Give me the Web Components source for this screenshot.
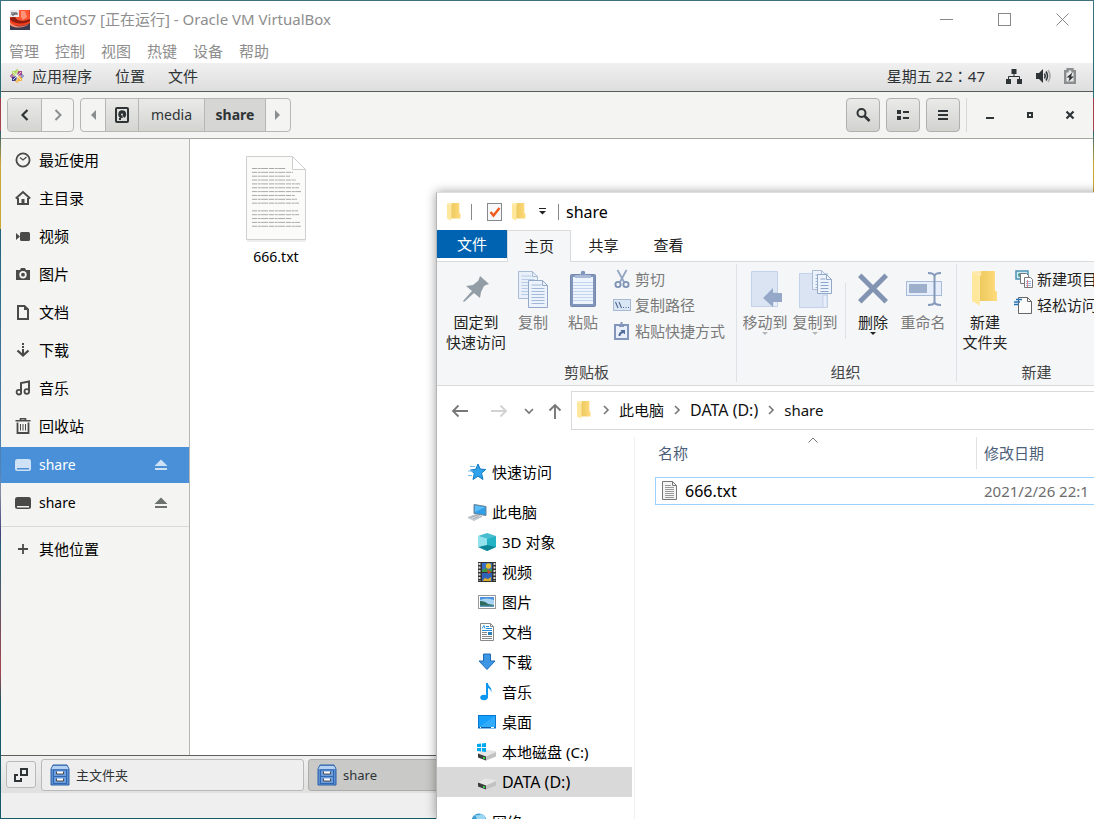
<!DOCTYPE html>
<html lang="zh-CN">
<head>
<meta charset="utf-8">
<title>CentOS7 - Oracle VM VirtualBox</title>
<style>
html,body{margin:0;height:100%;overflow:hidden}
body{font:15px/20px "Noto Sans","Noto Sans CJK SC",sans-serif;color:#111;background:linear-gradient(180deg,#3f7280 0,#2c6b78 5%,#2c6b78 12%,#a33b4a 12%,#a84450 16%,#2a5d6e 16%,#c9a63a 20%,#c9a63a 28%,#22647a 28%,#5484b8 58%,#8790a5 60%,#45407c 65%,#22647a 67%,#a5444d 82%,#155a66 86%)}
</style>
</head>
<body>
<desk-top>
  <vm-window></vm-window>
  <explorer-window></explorer-window>
</desk-top>
<script>
const ink = '#2e3436';
const folder = (w,h) => `<path d="M${w*.3} 0H${w*.88}V${h*.55}L${w*.96} ${h*.6}V${h*.86}H${w*.3}Z" fill="url(#fb)"/><path d="M0 0.5 L${w*.3} ${h*.14}V${h*.99}L0 ${h*.86}Z" fill="#ffe79c"/><path d="M0 .5L${w*.3} 0H${w*.36}V${h*.14}Z" fill="#ffe8a6"/><defs><linearGradient id="fb"><stop offset="0" stop-color="#edc95e"/><stop offset="1" stop-color="#ffdb7d"/></linearGradient></defs>`;
const drive = '<path d="M0 7.500L7 3.500 18 5v5L8 14.500 0 11.500Z" fill="#e6e6e6"/><path d="M8 10.500L18 6v4.500L8 14.500Z" fill="#c2c2c2"/><path d="M0 7.500l8 3v4l-8-3Z" fill="#3c3c3c"/><path d="M5 11h2v2H5Z" fill="#2fd04a"/>';
const lines = (x,y,w,n,s,c) => Array.from({length:n},(_,i)=>`<path d="M${x} ${y+i*s}h${w}" stroke="${c}"/>`).join('');
const page = (x,y,w,h,st,f,c,n) => `<path d="M${x} ${y}h${w-5}l5 5v${h-5}h${-w}Z" fill="${f}" stroke="${st}"/><path d="M${x+w-5} ${y}v5h5" fill="none" stroke="${st}"/>${lines(x+3,y+4.500,w-9,1,3,c)}${lines(x+3,y+8,w-6,n,3,c)}`;
const textWidths = [34,41,38,44,48,47,49,43,45,47,0,46,47,40,48,49];
const textLines = textWidths.map((w,i)=>w?`<path d="M7 ${13.500+i*3.850}h${w}" stroke="#a9a9a9" stroke-dasharray="5 .7 3 .5 7 .8"/>`:'').join('');
const ICONS = {
 redhat:[20,20,`<rect width="20" height="20" fill="#d8351c"/><path d="M9 0h10l1 9-5 3-8-1-2-4Z" fill="#ff5532"/><path d="M11 1h4l2 6-4 3-2-3Z" fill="#ff9478"/><path d="M0 8l5-1c1 4 8 5 15 2v3c-6 4-16 3-20-1Z" fill="#8e1b0e"/><path d="M0 9c3 5 14 6 20 2v3c-5 4-15 4-20 0Z" fill="#f2401f"/><path d="M0 13c5 4 14 4 20 0v7H0Z" fill="#3b3b50"/><path d="M0 12c4 5 12 6 19 2-4 4-14 5-19 1Z" fill="#ff8c70"/><rect width="9" height="7" fill="#e8e8ee"/><path d="M2 2v3h2V2M5 5V3h2v2" stroke="#444" fill="none"/>`],
 centos:[14,14,`<path d="M7 0l2.200 2.200v4H4.800v-4Z" fill="#9ccd2a"/><path d="M7 14l2.200-2.200v-4H4.800v4Z" fill="#efa724"/><path d="M0 7l2.200-2.200h4v4.400h-4Z" fill="#932279"/><path d="M14 7l-2.200-2.200h-4v4.400h4Z" fill="#5b5aa5"/><path d="M2 2h3l2 2v3H4L2 5Z" fill="#b9d96a"/><path d="M12 2v3l-2 2H7V4l2-2Z" fill="#a8448c"/><path d="M2 12V9l2-2h3v3l-2 2Z" fill="#3f3e8f"/><path d="M12 12H9l-2-2V7h3l2 2Z" fill="#f0b243"/><path d="M7 1v12M1 7h12M3 3l8 8M11 3l-8 8" stroke="#f4f4f4" stroke-width=".8"/>`],
 wmin:[13,13,`<path d="M0 6.500h13" stroke="#888"/>`],
 wmax:[13,13,`<rect x=".5" y=".5" width="12" height="12" fill="none" stroke="#888"/>`],
 wclose:[13,13,`<path d="M.5.5l12 12M12.500.5l-12 12" stroke="#888"/>`],
 net:[16,16,`<path d="M5.500 1h5v5h-5ZM0 11h5v5H0ZM11 11h5v5h-5Z" fill="${ink}"/><path d="M8 6v3M2.500 11V8.500h11V11" stroke="${ink}" fill="none"/>`],
 vol:[16,16,`<path d="M1 5h3l4-4v14l-4-4H1Z" fill="${ink}"/><path d="M9.500 5.500q1.500 2.500 0 5M11 3.500q3 4.500 0 9" stroke="${ink}" stroke-width="1.500" fill="none"/><path d="M13 2q4 6 0 12" stroke="#aaa" stroke-width="1.600" fill="none"/>`],
 batt:[12,16,`<path d="M1.200 3.200h2.300v-2h5v2h2.300v11.600H1.200Z" fill="#e8e8e8" stroke="#8b8e8f" stroke-width="2.400"/><path d="M8.500 4.500l-6 5h3l-1 4 5.500-5H7Z" fill="${ink}"/>`],
 back:[16,16,`<path d="M10.500 3L5.500 8l5 5" fill="none" stroke="${ink}" stroke-width="2.200"/>`],
 fwd:[16,16,`<path d="M5.500 3l5 5-5 5" fill="none" stroke="#8b8e8f" stroke-width="2"/>`],
 tril:[8,12,`<path d="M7 1v10L2 6Z" fill="#8b8e8f"/>`],
 trir:[8,12,`<path d="M1 1v10l5-5Z" fill="#8b8e8f"/>`],
 disk:[16,16,`<rect x="2" y="1" width="12" height="14" rx="1" fill="none" stroke="${ink}" stroke-width="2"/><circle cx="8.200" cy="7.200" r="3.900" fill="${ink}"/><path d="M8 8l3.500 4.500-2 .5Z" fill="#ddd"/><circle cx="8" cy="7.500" r="1" fill="#ddd"/><rect x="5" y="11" width="2" height="2" fill="${ink}"/>`],
 search:[16,16,`<circle cx="6.500" cy="6" r="4" fill="none" stroke="${ink}" stroke-width="2"/><path d="M9.500 9l5 5" stroke="${ink}" stroke-width="2.600"/>`],
 list:[16,16,`<path d="M2 3h4v4H2ZM2 9h4v4H2ZM8 4h6v2H8ZM8 10h6v2H8Z" fill="${ink}"/>`],
 burger:[16,16,`<path d="M3 3h10v2H3ZM3 7h10v2H3ZM3 11h10v2H3Z" fill="${ink}"/>`],
 gmin:[16,16,`<path d="M4 10h8v2H4Z" fill="${ink}"/>`],
 gmax:[16,16,`<rect x="6" y="6" width="4" height="4" fill="none" stroke="${ink}" stroke-width="2"/>`],
 gclose:[16,16,`<path d="M4.500 4.500l7 7M11.500 4.500l-7 7" stroke="${ink}" stroke-width="2.200"/>`],
 clock:[16,16,`<circle cx="8" cy="8" r="6.600" fill="none" stroke="currentColor" stroke-width="1.800"/><path d="M5 5.500L8 8l3.500-3" fill="none" stroke="currentColor" stroke-width="1.300"/>`],
 home:[16,16,`<path d="M.8 8.500L8 2l7.200 6.500" fill="none" stroke="currentColor" stroke-width="1.900"/><path d="M3 8v6h10V8" fill="none" stroke="currentColor" stroke-width="2"/><path d="M6.500 9h3v5h-3Z" fill="currentColor"/>`],
 video:[16,16,`<rect x="5" y="4" width="10" height="9" rx="1.500" fill="currentColor"/><path d="M1 5l4 3.500L1 12Z" fill="currentColor"/>`],
 camera:[16,16,`<path d="M1 4h4l1-2h4l1 2h4v10H1Z" fill="currentColor"/><circle cx="8" cy="8.700" r="2.800" fill="none" stroke="#f4f4f2" stroke-width="1.800"/>`],
 doc:[16,16,`<path d="M3 2h6.500L13 5.500V15H3Z" fill="none" stroke="currentColor" stroke-width="2"/><path d="M9 1v5h5Z" fill="currentColor"/>`],
 down:[16,16,`<path d="M8 1v2M8 4v2M8 7v5" stroke="currentColor" stroke-width="2"/><path d="M2.500 8.500L8 13.500l5.500-5" fill="none" stroke="currentColor" stroke-width="2.300"/>`],
 music:[16,16,`<path d="M6 12V3l8-1.500V11" fill="none" stroke="currentColor" stroke-width="2"/><circle cx="3.900" cy="12.200" r="2.300" fill="none" stroke="currentColor" stroke-width="1.800"/><circle cx="11.800" cy="11.500" r="2.300" fill="none" stroke="currentColor" stroke-width="1.800"/>`],
 trash:[16,16,`<path d="M.5 2.800h15M5.500 2V.8h5V2" fill="none" stroke="currentColor" stroke-width="1.600"/><path d="M2.500 4.500V15h11V4.500" fill="none" stroke="currentColor" stroke-width="1.800"/><path d="M5.500 6v6.500M8 6v6.500M10.500 6v6.500" stroke="currentColor"/>`],
 volume:[16,16,`<path d="M2.500 2h11Q16 2 16 4.500v7Q16 14 13.500 14h-11Q0 14 0 11.500v-7Q0 2 2.500 2Z" fill="currentColor"/><path d="M2 11h12v1.500H2Z" fill="var(--slot-color,#f4f4f2)"/>`],
 eject:[14,14,`<path d="M7 1.500l6.500 6.500H.5ZM1 10h12v2H1Z" fill="currentColor"/>`],
 plus:[16,16,`<path d="M8 3v10M3 8h10" stroke="currentColor" stroke-width="1.800"/>`],
 bigtxt:[62,88,`<path d="M1.500 1.500h46l13 13v70h-59Z" fill="#fbfbfa" stroke="#cfcfcf"/><path d="M2 86h58.500" stroke="#ddd"/><path d="M47.500 1.500v13h13Z" fill="#fff" stroke="#cdcdcd"/>${textLines}`],
 switcher:[14,14,`<path d="M7 1h6v6H7Z" fill="none" stroke="${ink}" stroke-width="2"/><path d="M4 7H1v6h6V10" fill="none" stroke="${ink}" stroke-width="2"/>`],
 cabinet:[20,22,`<path d="M3 1h14l2 4v16H1V5Z" fill="#5c8fd0" stroke="#2d61a8"/><path d="M3 2h14l1.500 3h-17Z" fill="#b5d2f2"/><rect x="3.500" y="6" width="13" height="13.500" fill="#6d9ddd" stroke="#2f66b0"/><path d="M4 12.500h12" stroke="#2f66b0"/><path d="M6.500 7.500v2.500h7V7.500M6.500 14.500v2.500h7v-2.500" fill="#fff" stroke="#4b4b4b"/>`],
 f14:[14,18,folder(14,18)], f26:[28,36,`<g transform="translate(1,0)">${folder(26,35)}</g>`],
 check:[16,18,`<rect x=".5" y=".5" width="14" height="17" fill="#f6f8fa" stroke="#85888c"/><path d="M3.500 9l3 3.500L12.500 5" fill="none" stroke="#f0591c" stroke-width="2.400"/>`],
 qdrop:[9,9,`<path d="M1 1.500h7" stroke="#222"/><path d="M1 4h7l-3.500 3.500Z" fill="#222"/>`],
 pin:[30,30,`<path d="M19 2l9 8-3 1-2 1-3 6-1 6-6-5-10 9-1-1 9-10-6-5 7-1 5-4 1-2Z" fill="#929da6"/>`],
 copy:[32,38,page(1.500,1.500,19,27,'#a9bcd6','#e9f0fa','#b7cae6',6)+page(11.500,10.500,19,27,'#94a9c9','#edf3fc','#a3b9da',6)],
 paste:[28,38,`<rect x="1.500" y="4.500" width="25" height="32" rx="1" fill="#8296bb" stroke="#7288ae"/><rect x="4" y="7" width="20" height="27" fill="#eef4fd"/>${lines(4,12.500,20,7,3,'#c3d5ee')}<path d="M6 8V5h5l2-3h2l2 3h5v3Z" fill="#a9b9d6"/><circle cx="14" cy="3" r="2.300" fill="#8296bb"/>`],
 cut:[18,20,`<path d="M4.500 1l6.500 12M13.500 1L7 13" stroke="#93a5c2" stroke-width="1.800"/><circle cx="5" cy="15.500" r="2.600" fill="none" stroke="#7e93b6" stroke-width="1.900"/><circle cx="13" cy="15.500" r="2.600" fill="none" stroke="#7e93b6" stroke-width="1.900"/>`],
 cpath:[18,12,`<rect x=".5" y=".5" width="17" height="11" fill="#dbe6f5" stroke="#a7b8d1"/><path d="M2.500 3l2.500 6M6 3l2.500 6" stroke="#4f6a96" stroke-width="1.100"/><path d="M10 8.500h1M12.500 8.500h1M15 8.500h1" stroke="#4f6a96"/>`],
 shortcut:[18,20,`<rect x="2" y="4" width="13" height="14" fill="#e9f0fa" stroke="#8296bb" stroke-width="2"/><path d="M6 6V3h1.500V1h2v2H11v3Z" fill="#8296bb"/><path d="M5.500 15q0-4 3-4.500L7.500 9H12v4.500l-1.500-1.500Q7.500 12.500 7.500 15Z" fill="#536d9b"/>`],
 moveto:[34,38,`<path d="M3.500 1.500h26v35h-26Z" fill="#dae4f3" stroke="#c3d2e8"/><path d="M25 36v-13h4.500v13" fill="#e8effa" stroke="#c3d2e8"/><path d="M15 28l10-10v5h9v9h-9v5Z" fill="#96a8c8"/>`],
 copyto:[36,40,`<path d="M2.500 4.500h28v34h-28Z" fill="#dae4f3" stroke="#c3d2e8"/><path d="M26 38v-12h4v12" fill="#e8effa" stroke="#c3d2e8"/>${page(15.500,1.500,14,19,'#a9bcd6','#edf3fc','#9db4d8',4)}${page(20.500,5.500,14,19,'#94a9c9','#edf3fc','#8ba4cc',4)}`],
 del:[34,34,`<path d="M2 5l3.500-3.500L17 13 28.500 1.500 32 5 20.500 16.500 32 28l-3.500 3.500L17 20 5.500 31.500 2 28l11.500-11.500Z" fill="#8394b3"/>`],
 rename:[38,36,`<rect x="2.500" y="10.500" width="35" height="14" fill="#e6eefb" stroke="#a9bbd8"/><rect x="5" y="13" width="18" height="9" fill="#9eafcb"/><path d="M24 2q6 0 6.500 3v26q-.5 3-6.500 3M37 2q-6 0-6.500 3M37 34q-6 0-6.500-3" fill="none" stroke="#8599bb" stroke-width="2"/>`],
 newitem:[18,18,`<rect x="1" y="1" width="12" height="8" fill="#cdeaf6" stroke="#4b93b5" stroke-width="1.500"/><circle cx="5" cy="5" r="2" fill="#4a9a86"/><path d="M5.500 3.500h6l2 2v8h-8Z" fill="#fff" stroke="#777"/><path d="M9.500 7.500h6l2 2v8h-8Z" fill="#fff" stroke="#777"/><path d="M11 11.500h5M11 13.500h5M11 15.500h5" stroke="#9bb8e8"/><path d="M12.500 10v7" stroke="#e57a7a"/>`],
 easy:[18,19,`<path d="M3.500 1.500h9l4 4v12h-13Z" fill="#fbfbfb" stroke="#666"/><path d="M12.500 1.500v4h4" fill="none" stroke="#666"/><path d="M1 3.500h6M-1 6h6M-1 8.500h4" stroke="#2474b8" stroke-width="1.300"/>`],
 drop:[8,5,`<path d="M1 0h6l-3 3Z" fill="currentColor"/>`],
 aback:[18,14,`<path d="M16 7H1M6.500 1.500L1 7l5.500 5.500" fill="none" stroke="#777" stroke-width="1.800"/>`],
 afwd:[18,14,`<path d="M1 7h15M10.500 1.500L16 7l-5.500 5.500" fill="none" stroke="#d2d2d2" stroke-width="1.800"/>`],
 aup:[14,16,`<path d="M7 16V2M1.500 7.500L7 2l5.500 5.500" fill="none" stroke="#777" stroke-width="1.900"/>`],
 adown:[10,8,`<path d="M2 2l4 4 4-4" fill="none" stroke="#777" stroke-width="1.700"/>`],
 crumb:[8,10,`<path d="M1 1l4 4-4 4" fill="none" stroke="#777" stroke-width="1.600"/>`],
 sort:[10,6,`<path d="M.5 5.500L5 1l4.500 4.500" fill="none" stroke="#777"/>`],
 star:[18,18,`<path d="M9 1l2.200 5 5.500.5-4.200 3.700 1.500 6.300-5-3.300L4 16.500l1.300-6L1.500 7l5.200-.7Z" fill="#2ea3ec" stroke="#1479c0"/><path d="M1 3.500h5M-1 8h5M-1 12.500h4" stroke="#74bdec"/>`],
 pc:[20,18,`<path d="M6 1.500l12 2v9l-12-2Z" fill="#2f9fe8" stroke="#708090"/><path d="M7 2.500l10 1.700L7 9Z" fill="#5dbdf7"/><path d="M0 14.500l8-3 6 2-8 4Z" fill="#d3d8de" stroke="#9ba3ad" stroke-width=".6"/><path d="M2.500 14.500l7-2.200M5 16l6-2.500" stroke="#8c949e" stroke-width=".7"/>`],
 cube:[18,18,`<path d="M9 0l9 3-9 3-9-3Z" fill="#49bdd0"/><path d="M0 3l9 3v12l-9-4Z" fill="#8fe6ef"/><path d="M18 3l-9 3v12l9-4Z" fill="#1fa6b8"/><path d="M0 14l9-3 9 3-9 4Z" fill="#0f8697"/><path d="M9 6v6l-9 2V3Z" fill="#92e3eb"/><path d="M9 6v6l9 2V3Z" fill="#23b3c4"/>`],
 film:[18,20,`<rect width="18" height="20" fill="#333"/><path d="M1.500 1v18M16.500 1v18" stroke="#ddd" stroke-width="2" stroke-dasharray="2 1.500"/><rect x="4" y="1" width="10" height="9" fill="#356fc8"/><rect x="4" y="11" width="10" height="8" fill="#2f62bb"/><circle cx="10.500" cy="4" r="2.700" fill="#e7c02e"/><path d="M4 8l4-2 3 2 3-1v3H4Z" fill="#3e9942"/><path d="M9 7l4 3-3 2Z" fill="#d2412d"/><path d="M5 18l2-2 3 1 3-2v4H5Z" fill="#d7ab31"/>`],
 pic:[18,16,`<rect x=".5" y="1.500" width="17" height="13" fill="#fff" stroke="#999"/><rect x="2" y="3" width="14" height="10" fill="#a9d3f2"/><path d="M2 6q6-3 14 0v-3H2Z" fill="#4d92dc"/><path d="M2 7q5 0 8 3l6 1v1H2Z" fill="#2f6b5c"/><path d="M2 11.500h14v1.500H2Z" fill="#5e97b8"/>`],
 ndoc:[16,18,`<path d="M1.500.5h10l3 3v14h-13Z" fill="#fff" stroke="#888"/><path d="M11.500.5v3h3" fill="none" stroke="#888"/><path d="M3 5.500l2-3 1 3M7 3.500h3M7 5.500h6M3 7.500h10" fill="none" stroke="#2a90dd"/><path d="M3 9.500h5M3 11.500h5M3 13.500h10M3 15.500h10" stroke="#888"/><rect x="9" y="9" width="4" height="3" fill="#2b7fb2"/>`],
 ndown:[18,18,`<path d="M5.500 1h7v7h4.500l-8 8.500-8-8.500h4.500Z" fill="#3d96e4" stroke="#1f6db8"/>`],
 nmusic:[16,18,`<ellipse cx="5" cy="14.500" rx="3.700" ry="2.800" fill="#0d97f0"/><path d="M7 0h2c0 4 5 4 3 10 .3-3-1-4-3-5v10H7Z" fill="#0d97f0"/>`],
 desk:[18,14,`<rect x=".5" y=".5" width="17" height="12.500" fill="#17a0fb" stroke="#0b78cf"/><path d="M1 12L17 1v11Z" fill="#42b3fd" opacity=".6"/><path d="M1 12.500h16" stroke="#0a5da6"/><path d="M2 12.500h1M13 12.500h3" stroke="#fff"/>`],
 cdrive:[20,18,`<g transform="translate(1,3)">${drive}</g><path d="M0 1l4-.5V4H0ZM4.800.4L9 0v4H4.800ZM0 5h4v3.500L0 8ZM4.800 5H9v4l-4.200-.5Z" fill="#00a8f0"/>`],
 drive:[20,18,`<g transform="translate(1,2)">${drive}</g>`],
 globe:[20,18,`<circle cx="11" cy="8" r="7.500" fill="#3d9bd3"/><path d="M7 2q4 1 6-1 4 1 5 4l-4 3-5-2Z" fill="#9bd7f3"/><path d="M0 14l7-4 5 3-7 5Z" fill="#58aee6"/>`],
 txt:[16,20,`<path d="M.5.500h10l4 4v14H.5Z" fill="#f4f4f4" stroke="#777"/><path d="M10.500.5v4h4" fill="none" stroke="#777"/>${lines(3,4.500,6,1,2,'#999')}${lines(3,6.500,9,6,2,'#999')}`]
};
function define(name, css, html, setup){
  const t = document.createElement('template');
  t.innerHTML = `<style>*{box-sizing:border-box}button{font:inherit;color:inherit;background:none;border:0;padding:0;margin:0;white-space:nowrap}a{color:inherit;text-decoration:none}${css}</style>${html}`;
  customElements.define(name, class extends HTMLElement{
    connectedCallback(){
      if(this.shadowRoot) return;
      const r = this.attachShadow({mode:'open'});
      r.append(t.content.cloneNode(true));
      if(setup) setup(this, r);
    }
  });
}
function icon(name, cls=''){
  const i = document.createElement('ui-icon');
  i.setAttribute('name', name);
  i.className = cls;
  return i;
}
define('ui-icon', ':host{display:block;flex:none}div,svg{display:block;overflow:visible}', '<div></div>', (el,r)=>{
  const [w,h,m] = ICONS[el.getAttribute('name')];
  r.querySelector('div').innerHTML = `<svg width="${w}" height="${h}" viewBox="0 0 ${w} ${h}" aria-hidden="true">${m}</svg>`;
});
define('desk-top', ':host{display:block;position:relative;height:100vh;overflow:hidden}', '<slot></slot>');

define('place-item', `:host{display:block;color:#000}
 a{display:flex;align-items:center;gap:8px;height:36px;padding:0 21px 2px 14px}
 .i{color:#4a4a48} span{flex:1} .e{color:#6d7170}
 :host([selected]) a{background:#4a90d9;color:#fff}
 :host([selected]){--slot-color:#4a90d9}
 :host([selected]) .i,:host([selected]) .e{color:#cfe1f5}
 :host([latin]){font-size:14px}:host([latin]) a{padding-bottom:0}`,
 '<a href="#"><span><slot></slot></span></a>', (el,r)=>{
  const a = r.querySelector('a');
  a.prepend(icon(el.getAttribute('icon'),'i'));
  if(el.hasAttribute('eject')) a.append(icon('eject','e'));
});
define('places-list', `:host{display:flex;flex-direction:column;gap:2px;width:189px;flex:none;padding-top:4px;background:#f4f4f2;border-right:1px solid #b6b6b3}
 hr{width:100%;margin:3px 0;border:0;border-top:1px solid #d9d9d6}`,
 `<place-item icon="clock">最近使用</place-item><place-item icon="home">主目录</place-item><place-item icon="video">视频</place-item><place-item icon="camera">图片</place-item><place-item icon="doc">文档</place-item><place-item icon="down">下载</place-item><place-item icon="music">音乐</place-item><place-item icon="trash">回收站</place-item><place-item icon="volume" selected latin eject>share</place-item><place-item icon="volume" latin eject>share</place-item><hr><place-item icon="plus">其他位置</place-item>`);
define('files-header', `:host{display:flex;align-items:center;height:47px;padding:0 3px 0 6px;background:#f4f4f3;border-bottom:1px solid #a6a6a3;font-size:14px;color:${ink}}
 .g{display:flex;height:34px;border:1px solid #b6b6b3;border-radius:4px;overflow:hidden;margin-right:6px}
 .g button,.b{display:flex;align-items:center;justify-content:center}
 .g button+button{border-left:1px solid #b6b6b3}
 .n{width:33px}.n+.n{width:32px}.w{width:66px}.s{width:25px}.s:first-child{width:24px}
 .r{background:linear-gradient(#eaeae8,#d4d4d1)}
 .on{width:61px;background:#d6d6d4;font-weight:700}
 .f{flex:1}
 .b{width:34px;height:34px;border:1px solid #b0b0ad;border-radius:4px;background:linear-gradient(#eaeae8,#d2d2cf);margin-right:6px}
 .sep{width:1px;height:34px;background:#d8d8d5;margin-right:3px}
 .c{display:flex;width:40px;justify-content:center}`,
 `<div class="g"><button class="n r" aria-label="后退"><ui-icon name="back"></ui-icon></button><button class="n" aria-label="前进"><ui-icon name="fwd"></ui-icon></button></div>
 <div class="g"><button class="s" aria-label="上级"><ui-icon name="tril"></ui-icon></button><button class="n r" aria-label="磁盘"><ui-icon name="disk"></ui-icon></button><button class="w r">media</button><button class="on">share</button><button class="s" aria-label="下级"><ui-icon name="trir"></ui-icon></button></div>
 <span class="f"></span>
 <button class="b" aria-label="搜索"><ui-icon name="search"></ui-icon></button><button class="b" aria-label="列表"><ui-icon name="list"></ui-icon></button><button class="b" aria-label="菜单"><ui-icon name="burger"></ui-icon></button>
 <span class="sep"></span><button class="c" aria-label="最小化"><ui-icon name="gmin"></ui-icon></button><button class="c" aria-label="最大化"><ui-icon name="gmax"></ui-icon></button><button class="c" aria-label="关闭"><ui-icon name="gclose"></ui-icon></button>`);
define('task-bar', `:host{display:flex;align-items:center;gap:4px;height:38px;border-top:1px solid #5c5f5c;background:linear-gradient(#f0f0f0,#e0e0e0);padding:0 5px;font-size:13px;color:${ink}}
 button{display:flex;align-items:center;border:1px solid #b9b9b7;border-radius:3px;background:#eee}
 .sw{width:30px;height:27px;justify-content:center;margin-right:1px}
 .t{width:263px;height:32px;padding-left:8px;gap:6px}
 .on{background:#c9c9c8;border-color:#acacaa}`,
 `<button class="sw" aria-label="工作区"><ui-icon name="switcher"></ui-icon></button><button class="t"><ui-icon name="cabinet"></ui-icon>主文件夹</button><button class="t on"><ui-icon name="cabinet"></ui-icon>share</button>`);
define('vm-window', `:host{position:absolute;inset:1px;display:flex;flex-direction:column;background:#fff}
 .title{display:flex;align-items:center;height:37px;padding:0 24px 0 9px;gap:5px;color:#8e8e8e}
 .title span{flex:1;padding-bottom:2px}.title button{width:13px;margin-left:40px}
 .menu{display:flex;gap:16px;padding:3px 8px 2px;height:25px;color:#8e8e8e}
 .panel{display:flex;align-items:center;height:29px;border-bottom:1px solid #555a5a;background:linear-gradient(#f0f0f0,#dedede);padding:0 17px 2px 9px;color:${ink}}
 .panel button{margin-right:23px}
 .panel ui-icon[name=centos]{margin-right:8px}
 .panel span{margin-left:auto;margin-right:8px;font-family:"Noto Sans","Noto Sans CJK TC",sans-serif}
 .panel span~ui-icon{margin-left:13px}
 main{display:flex;flex:1;min-height:0}
 figure{margin:16px 0 0 40px;width:92px;display:flex;flex-direction:column;align-items:center;font-size:14px;color:#000}
 figcaption{margin-top:4px}
 .foot{height:25px;background:#efefef}`,
 `<header class="title"><ui-icon name="redhat"></ui-icon><span>CentOS7 [正在运行] - Oracle VM VirtualBox</span><button aria-label="最小化"><ui-icon name="wmin"></ui-icon></button><button aria-label="最大化"><ui-icon name="wmax"></ui-icon></button><button aria-label="关闭"><ui-icon name="wclose"></ui-icon></button></header>
 <nav class="menu"><button>管理</button><button>控制</button><button>视图</button><button>热键</button><button>设备</button><button>帮助</button></nav>
 <nav class="panel"><ui-icon name="centos"></ui-icon><button>应用程序</button><button>位置</button><button>文件</button><span lang="zh-TW">星期五 22：47</span><ui-icon name="net"></ui-icon><ui-icon name="vol"></ui-icon><ui-icon name="batt"></ui-icon></nav>
 <files-header></files-header>
 <main><places-list></places-list><figure><ui-icon name="bigtxt"></ui-icon><figcaption>666.txt</figcaption></figure></main>
 <task-bar></task-bar><div class="foot"></div>`);

define('ribbon-group', `:host{display:flex;flex-direction:column;padding-top:4px;height:123px;position:relative;flex:none}
 :host::after{content:"";position:absolute;right:0;top:2px;bottom:3px;border-right:1px solid #dfe2e5}
 .i{display:flex;height:96px}
 .l{text-align:center;color:#444}`, '<div class="i"><slot></slot></div><div class="l"></div>', (el,r)=>{r.querySelector('.l').textContent=el.getAttribute('label')});
define('ribbon-button', `:host{display:block;width:50px;flex:none;color:#222}
 :host([off]){color:#7a7a7a}
 button{width:100%;display:flex;flex-direction:column;align-items:center}
 .i{height:46px;display:flex;align-items:center}
 :host([off]) .d{color:#b4b6b8}`, '<button><span class="i"></span><slot></slot></button>', (el,r)=>{
  r.querySelector('.i').append(icon(el.getAttribute('icon')));
  if(el.hasAttribute('drop')) r.querySelector('button').append(icon('drop','d'));
});
define('ribbon-row', `:host{display:block;color:#222}:host([off]){color:#7a7a7a}
 button{display:flex;align-items:center;gap:4px;height:26px}.i{width:18px}`, '<button><span class="i"></span><slot></slot></button>', (el,r)=>{
  r.querySelector('.i').append(icon(el.getAttribute('icon')))});
define('ribbon-bar', `:host{display:flex;background:#f5f6f7;border-bottom:1px solid #d9dadb;height:124px}
 .a{padding-left:7px;padding-right:8px;width:300px}.rows{padding-left:5px}
 .o{padding-left:3px;padding-right:6px;width:220px}.sep{width:1px;height:56px;margin:17px 2px 0 5px;background:#dfe2e5}
 .n{padding-left:3px;width:156px}.pin{width:64px}`,
 `<ribbon-group class="a" label="剪贴板"><ribbon-button class="pin" icon="pin"><span>固定到</span><span>快速访问</span></ribbon-button><ribbon-button off icon="copy">复制</ribbon-button><ribbon-button off icon="paste">粘贴</ribbon-button><div class="rows"><ribbon-row off icon="cut">剪切</ribbon-row><ribbon-row off icon="cpath">复制路径</ribbon-row><ribbon-row off icon="shortcut">粘贴快捷方式</ribbon-row></div></ribbon-group>
 <ribbon-group class="o" label="组织"><ribbon-button off drop icon="moveto">移动到</ribbon-button><ribbon-button off drop icon="copyto">复制到</ribbon-button><span class="sep"></span><ribbon-button drop icon="del">删除</ribbon-button><ribbon-button off icon="rename">重命名</ribbon-button></ribbon-group>
 <ribbon-group class="n" label="新建"><ribbon-button icon="f26"><span>新建</span><span>文件夹</span></ribbon-button><div class="rows"><ribbon-row icon="newitem">新建项目</ribbon-row><ribbon-row icon="easy">轻松访问</ribbon-row></div></ribbon-group>`);
define('nav-item', `:host{display:block;color:#000}
 a{display:flex;align-items:center;height:30px;padding-left:40px;gap:5px}
 :host([top]) a{padding-left:31px;gap:4px}
 :host([selected]) a{background:#d9d9d9}
 :host([latin]){font-size:16px}
 .i{width:20px;display:flex;justify-content:center}`, '<a href="#"><span class="i"></span><span><slot></slot></span></a>', (el,r)=>{
  r.querySelector('.i').append(icon(el.getAttribute('icon')))});
define('nav-tree', `:host{display:block;width:198px;flex:none;padding:20px 2px 0 0;border-right:1px solid #f0f0f0;margin-top:7px}
 .gap{margin-top:10px}`,
 `<nav-item top icon="star">快速访问</nav-item><nav-item class="gap" top icon="pc">此电脑</nav-item><nav-item icon="cube">3D 对象</nav-item><nav-item icon="film">视频</nav-item><nav-item icon="pic">图片</nav-item><nav-item icon="ndoc">文档</nav-item><nav-item icon="ndown">下载</nav-item><nav-item icon="nmusic">音乐</nav-item><nav-item icon="desk">桌面</nav-item><nav-item icon="cdrive">本地磁盘 (C:)</nav-item><nav-item selected latin icon="drive">DATA (D:)</nav-item><nav-item class="gap" top icon="globe">网络</nav-item>`);
define('file-table', `:host{display:block;flex:1;padding:7px 0 0 20px;position:relative}
 table{border-collapse:separate;border-spacing:0;width:100%;table-layout:fixed}
 th{height:32px;padding:0 0 0 3px;text-align:left;font-weight:400;color:#4c607a}
 th:first-child{width:322px;border-right:1px solid #e2e2e2}
 th+th{padding-left:7px}
 .sp td{height:8px;padding:0;border:0}
 .row td{height:28px;padding:0 0 0 7px;border:solid #99d1ff;border-width:1px 0;color:#6d6d6d;white-space:nowrap}
 .row td:first-child{border-left-width:1px;color:#000;font-size:16px;padding-left:6px}
 .f{display:flex;align-items:center;gap:7px}
 .s{position:absolute;left:173px;top:7px}`,
 `<table><thead><tr><th>名称</th><th>修改日期</th></tr></thead><tbody><tr class="sp"><td colspan="2"></td></tr><tr class="row"><td><span class="f"><ui-icon name="txt"></ui-icon>666.txt</span></td><td>2021/2/26 22:1</td></tr></tbody></table><ui-icon class="s" name="sort"></ui-icon>`);
define('explorer-window', `:host{position:absolute;left:436px;top:192px;right:-24px;bottom:0;display:flex;flex-direction:column;background:#fff;border:solid #b5b5b5;border-width:1px 0 0 1px;border-top-color:#ddd;box-shadow:0 0 10px rgba(0,0,0,.38);overflow:hidden}
 .t{display:flex;align-items:center;height:37px;padding-left:10px;font-size:16px;color:#000}
 .v{width:1px;height:16px;background:#888}
 .t .v1{margin:0 15px 0 10px}
 .t .c2{margin:0 12px 0 9px}
 .t .c3{margin-right:11px}
 .t h1{font:inherit;margin:0 0 0 7px}
 .tabs{display:flex;height:32px;border-bottom:1px solid #d9dadb;color:#222}
 .tabs button{width:65px;height:31px;padding-bottom:2px}
 .tabs .file{width:70px;height:28px;padding:0;background:#0063b1;color:#fff}
 .tabs .on{width:64px;height:32px;background:#f5f6f7;border:1px solid #d9dadb;border-bottom:0}
 .ad{display:flex;align-items:center;height:44px;padding-top:5px}
 .ad>button{margin-left:15px}
 .ad .next{margin-left:20px}
 .box{display:flex;align-items:center;flex:1;height:39px;border:1px solid #d9d9d9;margin-left:9px;padding:0 0 2px 5px;color:#111}
 .box a{margin:0 10px 0 8px}
 .box .c{margin-left:12px}
 .box .l{font-size:16px}
 .body{display:flex;flex:1;min-height:0}`,
 `<header class="t"><ui-icon name="f14"></ui-icon><span class="v v1"></span><button aria-label="属性"><ui-icon name="check"></ui-icon></button><button class="c2" aria-label="新建文件夹"><ui-icon name="f14"></ui-icon></button><button class="c3" aria-label="自定义"><ui-icon name="qdrop"></ui-icon></button><span class="v"></span><h1>share</h1></header>
 <div class="tabs"><button class="file">文件</button><button class="on">主页</button><button>共享</button><button>查看</button></div>
 <ribbon-bar></ribbon-bar>
 <div class="ad"><button aria-label="后退"><ui-icon name="aback"></ui-icon></button><button class="next" aria-label="前进"><ui-icon name="afwd"></ui-icon></button><button aria-label="最近"><ui-icon name="adown"></ui-icon></button><button aria-label="向上"><ui-icon name="aup"></ui-icon></button>
 <div class="box"><ui-icon name="f14"></ui-icon><ui-icon class="c" name="crumb"></ui-icon><a href="#">此电脑</a><ui-icon name="crumb"></ui-icon><a class="l" href="#">DATA (D:)</a><ui-icon name="crumb"></ui-icon><a href="#">share</a></div></div>
 <div class="body"><nav-tree></nav-tree><file-table></file-table></div>`);
</script>
</body>
</html>
